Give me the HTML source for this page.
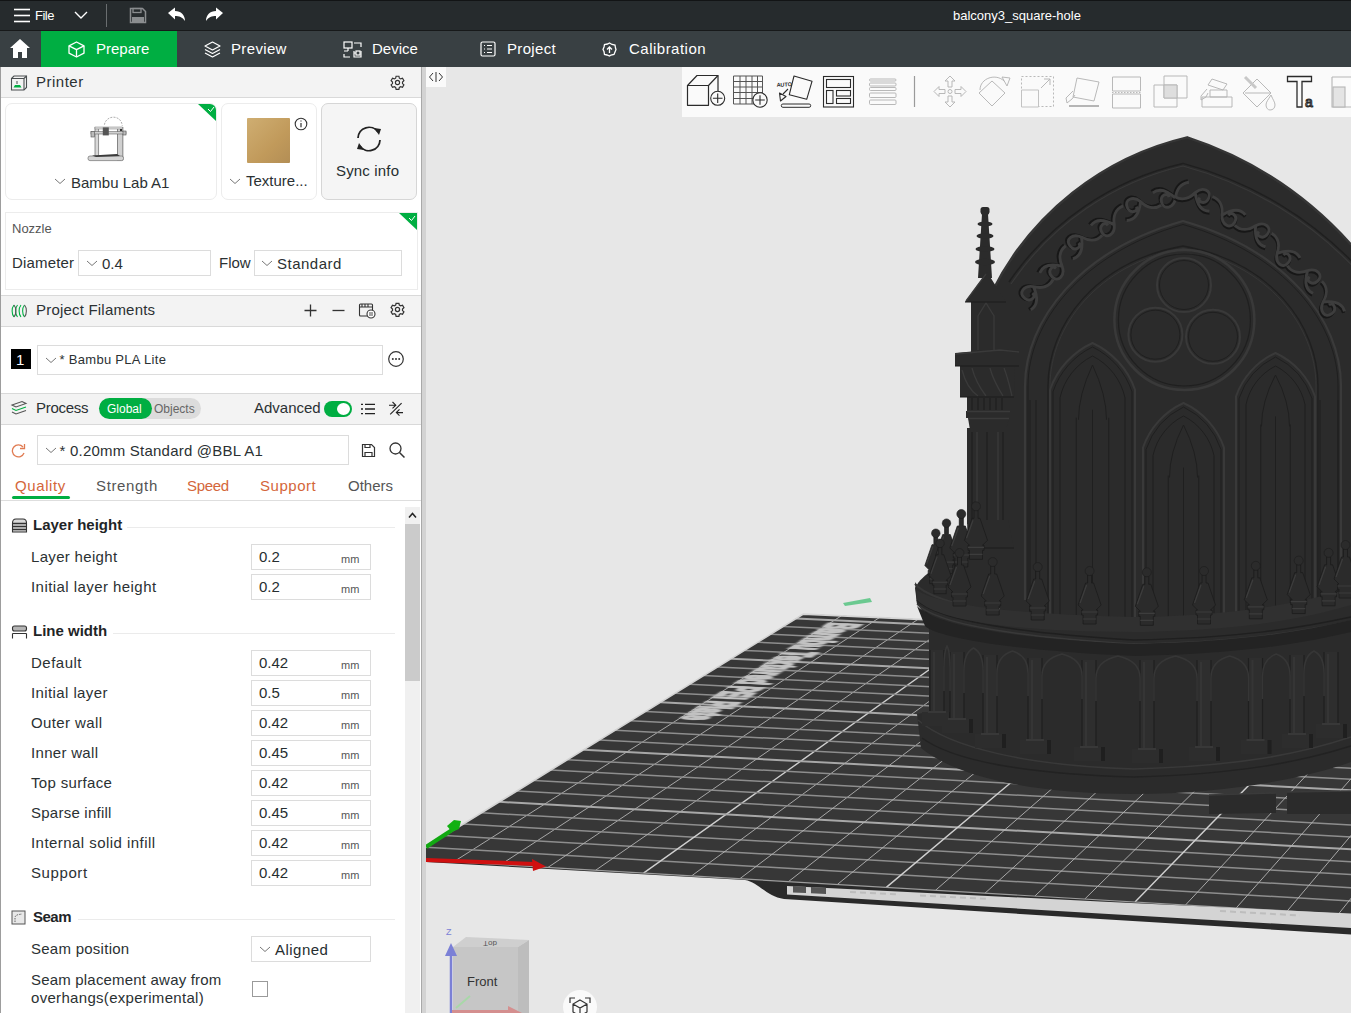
<!DOCTYPE html>
<html><head><meta charset="utf-8">
<style>
*{box-sizing:border-box;margin:0;padding:0}
html,body{width:1351px;height:1013px;overflow:hidden;background:#e4e4e4;font-family:"Liberation Sans",sans-serif;color:#262e30}
.a{position:absolute}
.t{position:absolute;white-space:nowrap;line-height:1}
#top{left:0;top:0;width:1351px;height:31px;background:#262b2d}
#tabs{left:0;top:31px;width:1351px;height:36px;background:#394043}
#left{left:0;top:67px;width:426px;height:946px;background:#fff}
.hdr{position:absolute;left:1px;width:420px;height:31px;background:#f3f3f3;border-bottom:1px solid #d9d9d9;border-top:1px solid #d9d9d9}
.inp{position:absolute;border:1px solid #dcdcdc;background:#fff}
.lbl{position:absolute;white-space:nowrap;line-height:1;font-size:15px;color:#2b3133}
.mm{position:absolute;font-size:11px;color:#555;line-height:1}
.val{position:absolute;font-size:15px;line-height:1;color:#262e30}
</style></head><body>

<div id="top" class="a">
 <svg class="a" style="left:13px;top:8px" width="18" height="15" viewBox="0 0 18 15"><g stroke="#fff" stroke-width="1.6"><line x1="1" y1="1.5" x2="17" y2="1.5"/><line x1="1" y1="7.5" x2="17" y2="7.5"/><line x1="1" y1="13.5" x2="17" y2="13.5"/></g></svg>
 <div class="t" style="left:35px;top:9px;font-size:13px;color:#fff;letter-spacing:-0.5px">File</div>
 <svg class="a" style="left:74px;top:11px" width="14" height="8" viewBox="0 0 14 8"><polyline points="1,1 7,7 13,1" fill="none" stroke="#fff" stroke-width="1.4"/></svg>
 <div class="a" style="left:106px;top:4px;width:1px;height:23px;background:#6a6e70"></div>
 <svg class="a" style="left:129px;top:7px" width="18" height="17" viewBox="0 0 18 17"><path d="M1.5 1.5h12l3 3v11h-15z" fill="none" stroke="#8a8d8f" stroke-width="1.5"/><rect x="4" y="1.5" width="8" height="4" fill="none" stroke="#8a8d8f" stroke-width="1.3"/><rect x="3" y="10" width="12" height="5" fill="#8a8d8f"/></svg>
 <svg class="a" style="left:167px;top:7px" width="19" height="15" viewBox="0 0 19 15"><path d="M1 6 L8 0.5 V4 C14 4 18 8 18 14 C15.5 10 12 9 8 9 V12.5 Z" fill="#fff"/></svg>
 <svg class="a" style="left:205px;top:7px" width="19" height="15" viewBox="0 0 19 15"><path d="M18 6 L11 0.5 V4 C5 4 1 8 1 14 C3.5 10 7 9 11 9 V12.5 Z" fill="#fff"/></svg>
 <div class="t" style="left:953px;top:9px;font-size:13px;color:#fff">balcony3_square-hole</div>
</div>
<div class="a" style="left:0;top:0;width:1351px;height:1px;background:#121415"></div><div class="a" style="left:0;top:30px;width:1351px;height:1px;background:#17191a"></div>
<div id="tabs" class="a">
 <svg class="a" style="left:9px;top:38px;top:7px" width="22" height="21" viewBox="0 0 22 21"><path d="M11 1 L21 10 H18 V20 H13 V14 H9 V20 H4 V10 H1 Z" fill="#fff"/></svg>
 <div class="a" style="left:41px;top:0;width:136px;height:36px;background:#00ae42"></div>
 <svg class="a" style="left:68px;top:10px" width="17" height="17" viewBox="0 0 17 17"><g fill="none" stroke="#fff" stroke-width="1.3" stroke-linejoin="round"><path d="M8.5 1 L16 4.8 V12.2 L8.5 16 L1 12.2 V4.8 Z"/><path d="M1 4.8 L8.5 8.6 L16 4.8 M8.5 8.6 V16"/></g></svg>
 <div class="t" style="left:96px;top:10px;font-size:15px;color:#fff">Prepare</div>
 <svg class="a" style="left:204px;top:10px" width="17" height="17" viewBox="0 0 17 17"><g fill="none" stroke="#fff" stroke-width="1.2" stroke-linejoin="round"><path d="M8.5 1 L16 5 L8.5 9 L1 5 Z"/><path d="M1 8.5 L8.5 12.5 L16 8.5"/><path d="M1 12 L8.5 16 L16 12"/></g></svg>
 <div class="t" style="left:231px;top:10px;font-size:15px;color:#fff;letter-spacing:0.35px">Preview</div>
 <svg class="a" style="left:343px;top:10px" width="19" height="17" viewBox="0 0 19 17"><g fill="none" stroke="#fff" stroke-width="1.2"><rect x="1" y="1" width="8" height="6"/><path d="M5 7v3M1 10h4M11 2h7v4M18 10v6h-7v-6M11 12h2"/><rect x="13" y="10" width="4" height="4"/><path d="M1 13v3h6"/></g></svg>
 <div class="t" style="left:372px;top:10px;font-size:15px;color:#fff">Device</div>
 <svg class="a" style="left:480px;top:10px" width="16" height="16" viewBox="0 0 16 16"><g fill="none" stroke="#fff" stroke-width="1.2"><rect x="1" y="1" width="14" height="14" rx="1.5"/><path d="M4 4.5h1M4 8h1M4 11.5h1M7 4.5h5M7 8h5M7 11.5h5"/></g></svg>
 <div class="t" style="left:507px;top:10px;font-size:15px;color:#fff;letter-spacing:0.33px">Project</div>
 <svg class="a" style="left:602px;top:11px" width="15" height="15" viewBox="0 0 15 15"><g fill="none" stroke="#fff" stroke-width="1.3"><path d="M7.5 1 L10 2.5 L13 3 L13.5 6 L14 7.5 L13 10 L12 12.5 L9 13 L7.5 14 L5 13 L2.5 12.5 L2 9.5 L1 7.5 L2 5 L2.5 2.5 L5.5 2 Z"/><path d="M7.5 11V5M5 7.5L7.5 5L10 7.5"/></g></svg>
 <div class="t" style="left:629px;top:10px;font-size:15px;color:#fff;letter-spacing:0.49px">Calibration</div>
</div>

<!--VP-->
<svg class="a" style="left:426px;top:67px" width="925" height="946" viewBox="426 67 925 946">
 <defs>
  <clipPath id="plateclip"><polygon points="406.5,859.1 803.4,614.1 1824.9,660.6 1683.2,934.3"/></clipPath>
  <linearGradient id="mg" x1="0" y1="0" x2="1" y2="0"><stop offset="0" stop-color="#2b2b2b"/><stop offset="1" stop-color="#303030"/></linearGradient>
 <filter id="blr" x="-10%" y="-10%" width="120%" height="120%"><feGaussianBlur stdDeviation="0.35"/></filter>
 </defs>
 <rect x="426" y="67" width="925" height="946" fill="#e7e7e7"/>
 <!-- plate body -->
 <path d="M406,861 L745,880 C758,882 766,896 784,899 L1100,919 L1351,934.5 L1700,945 L1824.9,660.6 L803.4,614.1 Z" fill="#2a2a2a"/>
 <polygon points="406.5,859.1 803.4,614.1 1824.9,660.6 1683.2,934.3" fill="#373737"/>
 <g clip-path="url(#plateclip)"><line x1="453.5" y1="861.9" x2="841.4" y2="615.8" stroke="#b4b4b4" stroke-width="0.9"/>
<line x1="425.9" y1="847.2" x2="1690.2" y2="920.8" stroke="#8e8e8e" stroke-width="1.5"/>
<line x1="500.7" y1="864.6" x2="879.6" y2="617.5" stroke="#b4b4b4" stroke-width="0.9"/>
<line x1="444.8" y1="835.5" x2="1697.0" y2="907.6" stroke="#8e8e8e" stroke-width="1.5"/>
<line x1="548.0" y1="867.4" x2="918.0" y2="619.3" stroke="#b4b4b4" stroke-width="0.9"/>
<line x1="463.3" y1="824.0" x2="1703.7" y2="894.7" stroke="#8e8e8e" stroke-width="1.5"/>
<line x1="595.7" y1="870.2" x2="956.4" y2="621.0" stroke="#b4b4b4" stroke-width="0.9"/>
<line x1="481.5" y1="812.8" x2="1710.3" y2="882.0" stroke="#8e8e8e" stroke-width="1.5"/>
<line x1="643.5" y1="873.1" x2="995.1" y2="622.8" stroke="#d0d0d0" stroke-width="1.4"/>
<line x1="499.4" y1="801.8" x2="1716.7" y2="869.6" stroke="#a8a8a8" stroke-width="2.0"/>
<line x1="691.6" y1="875.9" x2="1033.8" y2="624.5" stroke="#b4b4b4" stroke-width="0.9"/>
<line x1="516.9" y1="791.0" x2="1723.0" y2="857.4" stroke="#8e8e8e" stroke-width="1.5"/>
<line x1="739.9" y1="878.7" x2="1072.8" y2="626.3" stroke="#b4b4b4" stroke-width="0.9"/>
<line x1="534.1" y1="780.4" x2="1729.1" y2="845.5" stroke="#8e8e8e" stroke-width="1.5"/>
<line x1="788.5" y1="881.6" x2="1111.8" y2="628.1" stroke="#b4b4b4" stroke-width="0.9"/>
<line x1="550.9" y1="769.9" x2="1735.2" y2="833.9" stroke="#8e8e8e" stroke-width="1.5"/>
<line x1="837.3" y1="884.5" x2="1151.0" y2="629.9" stroke="#b4b4b4" stroke-width="0.9"/>
<line x1="567.5" y1="759.7" x2="1741.1" y2="822.4" stroke="#8e8e8e" stroke-width="1.5"/>
<line x1="886.3" y1="887.4" x2="1190.4" y2="631.7" stroke="#d0d0d0" stroke-width="1.4"/>
<line x1="583.7" y1="749.7" x2="1746.9" y2="811.2" stroke="#a8a8a8" stroke-width="2.0"/>
<line x1="935.5" y1="890.3" x2="1229.9" y2="633.5" stroke="#b4b4b4" stroke-width="0.9"/>
<line x1="599.7" y1="739.9" x2="1752.6" y2="800.2" stroke="#8e8e8e" stroke-width="1.5"/>
<line x1="985.0" y1="893.2" x2="1269.6" y2="635.3" stroke="#b4b4b4" stroke-width="0.9"/>
<line x1="615.3" y1="730.2" x2="1758.2" y2="789.4" stroke="#8e8e8e" stroke-width="1.5"/>
<line x1="1034.8" y1="896.1" x2="1309.5" y2="637.1" stroke="#b4b4b4" stroke-width="0.9"/>
<line x1="630.7" y1="720.7" x2="1763.7" y2="778.8" stroke="#8e8e8e" stroke-width="1.5"/>
<line x1="1084.8" y1="899.0" x2="1349.4" y2="638.9" stroke="#b4b4b4" stroke-width="0.9"/>
<line x1="645.8" y1="711.4" x2="1769.1" y2="768.4" stroke="#8e8e8e" stroke-width="1.5"/>
<line x1="1135.0" y1="902.0" x2="1389.6" y2="640.7" stroke="#d0d0d0" stroke-width="1.4"/>
<line x1="660.7" y1="702.2" x2="1774.4" y2="758.2" stroke="#a8a8a8" stroke-width="2.0"/>
<line x1="1185.5" y1="905.0" x2="1429.9" y2="642.6" stroke="#b4b4b4" stroke-width="0.9"/>
<line x1="675.3" y1="693.2" x2="1779.5" y2="748.2" stroke="#8e8e8e" stroke-width="1.5"/>
<line x1="1236.2" y1="908.0" x2="1470.3" y2="644.4" stroke="#b4b4b4" stroke-width="0.9"/>
<line x1="689.6" y1="684.3" x2="1784.6" y2="738.3" stroke="#8e8e8e" stroke-width="1.5"/>
<line x1="1287.2" y1="911.0" x2="1510.9" y2="646.3" stroke="#b4b4b4" stroke-width="0.9"/>
<line x1="703.7" y1="675.6" x2="1789.6" y2="728.7" stroke="#8e8e8e" stroke-width="1.5"/>
<line x1="1338.5" y1="914.0" x2="1551.7" y2="648.1" stroke="#b4b4b4" stroke-width="0.9"/>
<line x1="717.5" y1="667.1" x2="1794.5" y2="719.2" stroke="#8e8e8e" stroke-width="1.5"/>
<line x1="1390.0" y1="917.0" x2="1592.7" y2="650.0" stroke="#d0d0d0" stroke-width="1.4"/>
<line x1="731.2" y1="658.7" x2="1799.4" y2="709.8" stroke="#a8a8a8" stroke-width="2.0"/>
<line x1="1441.7" y1="920.1" x2="1633.7" y2="651.9" stroke="#b4b4b4" stroke-width="0.9"/>
<line x1="744.6" y1="650.4" x2="1804.1" y2="700.7" stroke="#8e8e8e" stroke-width="1.5"/>
<line x1="1493.8" y1="923.1" x2="1675.0" y2="653.7" stroke="#b4b4b4" stroke-width="0.9"/>
<line x1="757.7" y1="642.3" x2="1808.8" y2="691.7" stroke="#8e8e8e" stroke-width="1.5"/>
<line x1="1546.0" y1="926.2" x2="1716.4" y2="655.6" stroke="#b4b4b4" stroke-width="0.9"/>
<line x1="770.7" y1="634.3" x2="1813.3" y2="682.9" stroke="#8e8e8e" stroke-width="1.5"/>
<line x1="1598.6" y1="929.3" x2="1758.0" y2="657.5" stroke="#b4b4b4" stroke-width="0.9"/>
<line x1="783.4" y1="626.4" x2="1817.8" y2="674.2" stroke="#8e8e8e" stroke-width="1.5"/>
<line x1="1651.4" y1="932.4" x2="1799.8" y2="659.4" stroke="#d0d0d0" stroke-width="1.4"/>
<line x1="796.0" y1="618.6" x2="1822.3" y2="665.6" stroke="#a8a8a8" stroke-width="2.0"/></g>
 <polyline points="406.5,859.1 803.4,614.1 1824.9,660.6" fill="none" stroke="#d4d4d4" stroke-width="1.6"/>
 <text x="0" y="0" transform="matrix(-1.3325,0.8566,-4.0149,-0.1849,830.75,622.44)" font-family="Liberation Sans" font-weight="bold" font-size="11" textLength="113" lengthAdjust="spacingAndGlyphs" fill="#c2c2c2" stroke="#c2c2c2" stroke-width="1.2" filter="url(#blr)">Bambu Textured PEI Plate</text>
 <line x1="406.5" y1="859.1" x2="1683.2" y2="934.3" stroke="#9c9c9c" stroke-width="1.2"/>
 <!-- light strip -->
 <polygon points="787,886 1100,901.5 1351,913.5 1351,928 1100,913.5 787,894.5" fill="#d4d4d4"/>
 <path d="M793,886 L806,886.7 L806,893 L793,892.5 Z M811,887 L826,887.8 L826,894 L811,893.3 Z" fill="#555"/>
 <path d="M850,892 L900,894.5 M920,895.5 L990,899 M1220,911 L1300,915.5" stroke="#bdbdbd" stroke-width="2" stroke-dasharray="6 4"/>
 <!-- axes -->
 <path d="M426,860 L535,864" stroke="#d01010" stroke-width="4"/>
 <path d="M532,859 L546,866.5 L533,871 Z" fill="#d01010"/>
 <path d="M426,847 L452,830" stroke="#12a812" stroke-width="4"/>
 <path d="M447,826 L454,820 L461,821 L459,829 L452,832 Z" fill="#12b012"/>
 <path d="M843,603 L870,598 L872,602 L845,606 Z" fill="#4cc27a" opacity="0.8"/>
<!--MODEL--><path d="M992,292 A293,293 0 0 1 1187.2,137.4 A377.5,377.5 0 0 1 1351,244.5 L1351,630 L1000,630 Z" fill="#2b2b2b"/>
<path d="M992,292 A293,293 0 0 1 1187.2,137.4 A377.5,377.5 0 0 1 1351,244.5" fill="none" stroke="#353535" stroke-width="2.5"/>
<path d="M1009,282 A288.5,288.5 0 0 1 1183,163.4 A372,372 0 0 1 1362,272" fill="none" stroke="#1f1f1f" stroke-width="1.5"/>
<path d="M1011,284 A286.5,286.5 0 0 1 1183,166 A370,370 0 0 1 1360,274" fill="none" stroke="#383838" stroke-width="1.2"/>
<path d="M1025,600 V386 C1025,320 1080,250 1183,221 C1286,250 1341,320 1341,386 V616" fill="none" stroke="#3a3a3a" stroke-width="2.2"/>
<path d="M1028,600 V386 C1028,322 1082,253 1183,224.5 C1284,253 1338,322 1338,386 V616" fill="none" stroke="#1f1f1f" stroke-width="1"/>
<path d="M1048,614 V386 C1048,325 1095,262 1183,246 C1271,262 1318,325 1318,386 V614" fill="none" stroke="#1f1f1f" stroke-width="1.3"/>
<path d="M1050,614 V386 C1050,327 1097,264 1183,248.5 C1269,264 1316,327 1316,386 V614" fill="none" stroke="#363636" stroke-width="1"/>
<g transform="translate(1172.9,194.5) rotate(163.6) scale(1.45)"><path d="M-13,5 C-7,6 -3,2 -1,-3 C2,-9 9,-9 9,-3 C9,2 3,3 3,-1 M-1,-3 C3,4 8,7 13,5" fill="none" stroke="#171717" stroke-width="2.2" transform="translate(0.5,1.2)"/><path d="M-13,5 C-7,6 -3,2 -1,-3 C2,-9 9,-9 9,-3 C9,2 3,3 3,-1 M-1,-3 C3,4 8,7 13,5" fill="none" stroke="#3d3d3d" stroke-width="2"/></g>
<g transform="translate(1141.0,206.2) rotate(156.1) scale(1.45)"><path d="M-13,-5 C-7,-6 -3,-2 -1,3 C2,9 9,9 9,3 C9,-2 3,-3 3,1 M-1,3 C3,-4 8,-7 13,-5" fill="none" stroke="#171717" stroke-width="2.2" transform="translate(0.5,1.2)"/><path d="M-13,-5 C-7,-6 -3,-2 -1,3 C2,9 9,9 9,3 C9,-2 3,-3 3,1 M-1,3 C3,-4 8,-7 13,-5" fill="none" stroke="#3d3d3d" stroke-width="2"/></g>
<g transform="translate(1110.8,221.9) rotate(148.7) scale(1.45)"><path d="M-13,5 C-7,6 -3,2 -1,-3 C2,-9 9,-9 9,-3 C9,2 3,3 3,-1 M-1,-3 C3,4 8,7 13,5" fill="none" stroke="#171717" stroke-width="2.2" transform="translate(0.5,1.2)"/><path d="M-13,5 C-7,6 -3,2 -1,-3 C2,-9 9,-9 9,-3 C9,2 3,3 3,-1 M-1,-3 C3,4 8,7 13,5" fill="none" stroke="#3d3d3d" stroke-width="2"/></g>
<g transform="translate(1083.0,241.4) rotate(141.2) scale(1.45)"><path d="M-13,-5 C-7,-6 -3,-2 -1,3 C2,9 9,9 9,3 C9,-2 3,-3 3,1 M-1,3 C3,-4 8,-7 13,-5" fill="none" stroke="#171717" stroke-width="2.2" transform="translate(0.5,1.2)"/><path d="M-13,-5 C-7,-6 -3,-2 -1,3 C2,9 9,9 9,3 C9,-2 3,-3 3,1 M-1,3 C3,-4 8,-7 13,-5" fill="none" stroke="#3d3d3d" stroke-width="2"/></g>
<g transform="translate(1058.0,264.4) rotate(133.8) scale(1.45)"><path d="M-13,5 C-7,6 -3,2 -1,-3 C2,-9 9,-9 9,-3 C9,2 3,3 3,-1 M-1,-3 C3,4 8,7 13,5" fill="none" stroke="#171717" stroke-width="2.2" transform="translate(0.5,1.2)"/><path d="M-13,5 C-7,6 -3,2 -1,-3 C2,-9 9,-9 9,-3 C9,2 3,3 3,-1 M-1,-3 C3,4 8,7 13,5" fill="none" stroke="#3d3d3d" stroke-width="2"/></g>
<g transform="translate(1036.1,290.4) rotate(126.3) scale(1.45)"><path d="M-13,-5 C-7,-6 -3,-2 -1,3 C2,9 9,9 9,3 C9,-2 3,-3 3,1 M-1,3 C3,-4 8,-7 13,-5" fill="none" stroke="#171717" stroke-width="2.2" transform="translate(0.5,1.2)"/><path d="M-13,-5 C-7,-6 -3,-2 -1,3 C2,9 9,9 9,3 C9,-2 3,-3 3,1 M-1,3 C3,-4 8,-7 13,-5" fill="none" stroke="#3d3d3d" stroke-width="2"/></g>
<g transform="translate(1194.9,197.2) rotate(22.9) scale(1.45)"><path d="M-13,5 C-7,6 -3,2 -1,-3 C2,-9 9,-9 9,-3 C9,2 3,3 3,-1 M-1,-3 C3,4 8,7 13,5" fill="none" stroke="#171717" stroke-width="2.2" transform="translate(0.5,1.2)"/><path d="M-13,5 C-7,6 -3,2 -1,-3 C2,-9 9,-9 9,-3 C9,2 3,3 3,-1 M-1,-3 C3,4 8,7 13,5" fill="none" stroke="#3d3d3d" stroke-width="2"/></g>
<g transform="translate(1225.4,212.1) rotate(29.0) scale(1.45)"><path d="M-13,-5 C-7,-6 -3,-2 -1,3 C2,9 9,9 9,3 C9,-2 3,-3 3,1 M-1,3 C3,-4 8,-7 13,-5" fill="none" stroke="#171717" stroke-width="2.2" transform="translate(0.5,1.2)"/><path d="M-13,-5 C-7,-6 -3,-2 -1,3 C2,9 9,9 9,3 C9,-2 3,-3 3,1 M-1,3 C3,-4 8,-7 13,-5" fill="none" stroke="#3d3d3d" stroke-width="2"/></g>
<g transform="translate(1254.3,230.1) rotate(35.0) scale(1.45)"><path d="M-13,5 C-7,6 -3,2 -1,-3 C2,-9 9,-9 9,-3 C9,2 3,3 3,-1 M-1,-3 C3,4 8,7 13,5" fill="none" stroke="#171717" stroke-width="2.2" transform="translate(0.5,1.2)"/><path d="M-13,5 C-7,6 -3,2 -1,-3 C2,-9 9,-9 9,-3 C9,2 3,3 3,-1 M-1,-3 C3,4 8,7 13,5" fill="none" stroke="#3d3d3d" stroke-width="2"/></g>
<g transform="translate(1281.1,251.0) rotate(41.0) scale(1.45)"><path d="M-13,-5 C-7,-6 -3,-2 -1,3 C2,9 9,9 9,3 C9,-2 3,-3 3,1 M-1,3 C3,-4 8,-7 13,-5" fill="none" stroke="#171717" stroke-width="2.2" transform="translate(0.5,1.2)"/><path d="M-13,-5 C-7,-6 -3,-2 -1,3 C2,9 9,9 9,3 C9,-2 3,-3 3,1 M-1,3 C3,-4 8,-7 13,-5" fill="none" stroke="#3d3d3d" stroke-width="2"/></g>
<g transform="translate(1305.5,274.6) rotate(47.0) scale(1.45)"><path d="M-13,5 C-7,6 -3,2 -1,-3 C2,-9 9,-9 9,-3 C9,2 3,3 3,-1 M-1,-3 C3,4 8,7 13,5" fill="none" stroke="#171717" stroke-width="2.2" transform="translate(0.5,1.2)"/><path d="M-13,5 C-7,6 -3,2 -1,-3 C2,-9 9,-9 9,-3 C9,2 3,3 3,-1 M-1,-3 C3,4 8,7 13,5" fill="none" stroke="#3d3d3d" stroke-width="2"/></g>
<g transform="translate(1327.4,300.6) rotate(53.0) scale(1.45)"><path d="M-13,-5 C-7,-6 -3,-2 -1,3 C2,9 9,9 9,3 C9,-2 3,-3 3,1 M-1,3 C3,-4 8,-7 13,-5" fill="none" stroke="#171717" stroke-width="2.2" transform="translate(0.5,1.2)"/><path d="M-13,-5 C-7,-6 -3,-2 -1,3 C2,9 9,9 9,3 C9,-2 3,-3 3,1 M-1,3 C3,-4 8,-7 13,-5" fill="none" stroke="#3d3d3d" stroke-width="2"/></g>
<circle cx="1184.4" cy="320" r="70" fill="none" stroke="#393939" stroke-width="2.5"/>
<circle cx="1184.4" cy="320" r="66" fill="none" stroke="#1f1f1f" stroke-width="1.2"/>
<circle cx="1184" cy="285" r="27" fill="none" stroke="#393939" stroke-width="2"/>
<circle cx="1184" cy="285" r="24.5" fill="none" stroke="#1f1f1f" stroke-width="1"/>
<circle cx="1155.4" cy="334.7" r="27" fill="none" stroke="#393939" stroke-width="2"/>
<circle cx="1155.4" cy="334.7" r="24.5" fill="none" stroke="#1f1f1f" stroke-width="1"/>
<circle cx="1213" cy="336.8" r="27" fill="none" stroke="#393939" stroke-width="2"/>
<circle cx="1213" cy="336.8" r="24.5" fill="none" stroke="#1f1f1f" stroke-width="1"/>
<path d="M1050,618 L1050,389.75 A80.75,80.75 0 0 1 1092.5,343 A80.75,80.75 0 0 1 1135,389.75 L1135,618" fill="none" stroke="#393939" stroke-width="2"/>
<path d="M1053,618 L1053,391.75 A76.5,76.5 0 0 1 1092.5,347 A76.5,76.5 0 0 1 1132,391.75 L1132,618" fill="none" stroke="#1f1f1f" stroke-width="1"/>
<path d="M1060,618 L1060,397.75 A61.75,61.75 0 0 1 1092.5,356 A61.75,61.75 0 0 1 1125,397.75 L1125,618" fill="none" stroke="#1f1f1f" stroke-width="1"/>
<path d="M1092.5,409.75 V618 M1076.25,417.75 V618 M1108.75,417.75 V618" stroke="#1f1f1f" stroke-width="1"/>
<path d="M1078.5,419.75 Q1078.5,394.75 1092.5,365 Q1106.5,394.75 1106.5,419.75" fill="none" stroke="#1f1f1f" stroke-width="1"/>
<path d="M1143,622 L1143,447.55 A76.95,76.95 0 0 1 1183.5,403 A76.95,76.95 0 0 1 1224,447.55 L1224,622" fill="none" stroke="#393939" stroke-width="2"/>
<path d="M1146,622 L1146,449.55 A72.9,72.9 0 0 1 1183.5,407 A72.9,72.9 0 0 1 1221,449.55 L1221,622" fill="none" stroke="#1f1f1f" stroke-width="1"/>
<path d="M1153,622 L1153,455.55 A57.949999999999996,57.949999999999996 0 0 1 1183.5,416 A57.949999999999996,57.949999999999996 0 0 1 1214,455.55 L1214,622" fill="none" stroke="#1f1f1f" stroke-width="1"/>
<path d="M1183.5,467.55 V622 M1168.25,475.55 V622 M1198.75,475.55 V622" stroke="#1f1f1f" stroke-width="1"/>
<path d="M1169.5,477.55 Q1169.5,452.55 1183.5,425 Q1197.5,452.55 1197.5,477.55" fill="none" stroke="#1f1f1f" stroke-width="1"/>
<path d="M1236,618 L1236,396.45 A75.05,75.05 0 0 1 1275.5,353 A75.05,75.05 0 0 1 1315,396.45 L1315,618" fill="none" stroke="#393939" stroke-width="2"/>
<path d="M1239,618 L1239,398.45 A71.10000000000001,71.10000000000001 0 0 1 1275.5,357 A71.10000000000001,71.10000000000001 0 0 1 1312,398.45 L1312,618" fill="none" stroke="#1f1f1f" stroke-width="1"/>
<path d="M1246,618 L1246,404.45 A56.05,56.05 0 0 1 1275.5,366 A56.05,56.05 0 0 1 1305,404.45 L1305,618" fill="none" stroke="#1f1f1f" stroke-width="1"/>
<path d="M1275.5,416.45 V618 M1260.75,424.45 V618 M1290.25,424.45 V618" stroke="#1f1f1f" stroke-width="1"/>
<path d="M1261.5,426.45 Q1261.5,401.45 1275.5,375 Q1289.5,401.45 1289.5,426.45" fill="none" stroke="#1f1f1f" stroke-width="1"/>
<path d="M1030,400 V612 M1036,400 V614 M1320,400 V612 M1338,400 V606" stroke="#1f1f1f" stroke-width="1"/>
<g fill="#2b2b2b">
 <polygon points="982,214 988,214 992,278 978,278"/>
 <circle cx="985" cy="212" r="4.2"/>
 <rect x="980.5" y="207" width="9" height="7" rx="2.5"/>
 <ellipse cx="985" cy="224" rx="7.5" ry="2.6"/>
 <ellipse cx="985" cy="236" rx="8.5" ry="2.8"/>
 <ellipse cx="985" cy="249" rx="9.5" ry="3"/>
 <ellipse cx="985" cy="262" rx="10" ry="3.2"/>
 <polygon points="965,302 987,272 1006,302 1001,302 1001,352 971,352 971,302"/>
 <polygon points="955,353 1000,349 1019,351 1019,366 955,366"/>
 <polygon points="960,366 1015,366 1014,397 960,397"/>
 <rect x="967" y="396" width="43" height="16"/>
 <rect x="966" y="411" width="45" height="7"/>
 <polygon points="968,418 1009,418 1006,430 970,430"/>
 <rect x="967" y="428" width="41" height="96"/>
 <polygon points="967,520 1008,520 1014,550 968,550"/>
 <rect x="968" y="548" width="46" height="60"/>
</g>
<g fill="none" stroke="#3a3a3a" stroke-width="1.3">
 <path d="M966,301 L986,274"/>
 <path d="M978,350 V316 L986,303 L994,316 V350"/>
 <path d="M955,354 L1000,350 L1019,352"/>
 <path d="M962,370 C966,385 972,392 978,396 M972,368 C975,380 980,388 986,396 M990,368 C993,380 998,388 1003,396 M1004,368 C1008,378 1010,388 1012,396"/>
 <path d="M967,411.5 H1010 M968,418.5 H1009"/>
 <path d="M977,432 V520 M998,432 V520"/>
</g>
<g fill="none" stroke="#1c1c1c" stroke-width="1">
 <path d="M965,302 H1006 M955,366 H1019 M960,397 H1014"/>
 <path d="M972,398 V410 M978,398 V410 M984,398 V410 M990,398 V410 M996,398 V410 M1002,398 V410"/>
 <path d="M972,432 V520 M987,432 V520 M1003,432 V520"/>
 <path d="M968,548 H1014"/>
</g>
<path d="M915,582 C925,600 990,621 1134,627 C1230,626 1300,614 1351,600 L1351,762 C1300,780 1220,794 1134,794 C1030,794 955,776 921,748 L917,714 L929,712 L929,620 L917,604 Z" fill="#2b2b2b"/>
<path d="M915,588 C922,574 942,562 970,553 L970,625 L917,604 Z" fill="#2b2b2b"/>
<path d="M915,584 C930,600 990,619 1134,625 C1230,624 1300,612 1351,598" fill="none" stroke="#363636" stroke-width="2"/>
<path d="M917,600 C935,618 1000,632 1134,640 C1240,638 1300,628 1351,617" fill="none" stroke="#1f1f1f" stroke-width="1.5"/>
<path d="M917,604 C935,622 1000,636 1134,644 C1240,642 1300,632 1351,621" fill="none" stroke="#393939" stroke-width="1.5"/>
<path d="M925,612 C940,628 1000,642 1134,648 C1240,646 1300,636 1351,626" fill="none" stroke="#222" stroke-width="2"/>
<path d="M917,590 C935,603 1000,614 1134,617 C1230,616 1300,604 1351,588 L1351,605 C1300,620 1240,630 1134,632 C1000,632 935,618 917,600 Z" fill="#303030"/>
<path d="M917,606 C935,624 1000,638 1134,644 C1240,642 1300,632 1351,620 L1351,632 C1300,644 1240,654 1134,656 C1000,650 935,636 925,626 Z" fill="#232323"/>
<path d="M918,720 C950,748 1030,766 1134,769 C1240,766 1300,754 1351,737" fill="none" stroke="#393939" stroke-width="1.5"/>
<path d="M922,738 C955,762 1030,774 1134,777 C1240,774 1300,762 1351,746" fill="none" stroke="#222" stroke-width="1.5"/>
<rect x="930" y="650" width="14" height="66" fill="#2e2e2e"/>
<path d="M930,650 V716 M944,650 V716" stroke="#1f1f1f" stroke-width="1.2"/>
<path d="M934,652 V714" stroke="#353535" stroke-width="2"/>
<rect x="922" y="712" width="30" height="14" fill="#2d2d2d"/><rect x="949" y="712" width="4" height="14" fill="#1f1f1f"/><path d="M928,712 H946" stroke="#383838" stroke-width="2"/>
<rect x="950" y="652" width="14" height="71" fill="#2e2e2e"/>
<path d="M950,652 V723 M964,652 V723" stroke="#1f1f1f" stroke-width="1.2"/>
<path d="M954,654 V721" stroke="#353535" stroke-width="2"/>
<rect x="942" y="719" width="30" height="14" fill="#2d2d2d"/><rect x="969" y="719" width="4" height="14" fill="#1f1f1f"/><path d="M948,719 H966" stroke="#383838" stroke-width="2"/>
<rect x="983" y="655" width="14" height="83" fill="#2e2e2e"/>
<path d="M983,655 V738 M997,655 V738" stroke="#1f1f1f" stroke-width="1.2"/>
<path d="M987,657 V736" stroke="#353535" stroke-width="2"/>
<rect x="975" y="734" width="30" height="14" fill="#2d2d2d"/><rect x="1002" y="734" width="4" height="14" fill="#1f1f1f"/><path d="M981,734 H999" stroke="#383838" stroke-width="2"/>
<rect x="1028" y="658" width="14" height="86" fill="#2e2e2e"/>
<path d="M1028,658 V744 M1042,658 V744" stroke="#1f1f1f" stroke-width="1.2"/>
<path d="M1032,660 V742" stroke="#353535" stroke-width="2"/>
<rect x="1020" y="740" width="30" height="14" fill="#2d2d2d"/><rect x="1047" y="740" width="4" height="14" fill="#1f1f1f"/><path d="M1026,740 H1044" stroke="#383838" stroke-width="2"/>
<rect x="1082" y="660" width="14" height="91" fill="#2e2e2e"/>
<path d="M1082,660 V751 M1096,660 V751" stroke="#1f1f1f" stroke-width="1.2"/>
<path d="M1086,662 V749" stroke="#353535" stroke-width="2"/>
<rect x="1074" y="747" width="30" height="14" fill="#2d2d2d"/><rect x="1101" y="747" width="4" height="14" fill="#1f1f1f"/><path d="M1080,747 H1098" stroke="#383838" stroke-width="2"/>
<rect x="1140" y="660" width="14" height="93" fill="#2e2e2e"/>
<path d="M1140,660 V753 M1154,660 V753" stroke="#1f1f1f" stroke-width="1.2"/>
<path d="M1144,662 V751" stroke="#353535" stroke-width="2"/>
<rect x="1132" y="749" width="30" height="14" fill="#2d2d2d"/><rect x="1159" y="749" width="4" height="14" fill="#1f1f1f"/><path d="M1138,749 H1156" stroke="#383838" stroke-width="2"/>
<rect x="1197" y="660" width="14" height="91" fill="#2e2e2e"/>
<path d="M1197,660 V751 M1211,660 V751" stroke="#1f1f1f" stroke-width="1.2"/>
<path d="M1201,662 V749" stroke="#353535" stroke-width="2"/>
<rect x="1189" y="747" width="30" height="14" fill="#2d2d2d"/><rect x="1216" y="747" width="4" height="14" fill="#1f1f1f"/><path d="M1195,747 H1213" stroke="#383838" stroke-width="2"/>
<rect x="1248.5" y="658" width="14" height="86" fill="#2e2e2e"/>
<path d="M1248.5,658 V744 M1262.5,658 V744" stroke="#1f1f1f" stroke-width="1.2"/>
<path d="M1252.5,660 V742" stroke="#353535" stroke-width="2"/>
<rect x="1240.5" y="740" width="30" height="14" fill="#2d2d2d"/><rect x="1267.5" y="740" width="4" height="14" fill="#1f1f1f"/><path d="M1246.5,740 H1264.5" stroke="#383838" stroke-width="2"/>
<rect x="1290" y="655" width="14" height="83" fill="#2e2e2e"/>
<path d="M1290,655 V738 M1304,655 V738" stroke="#1f1f1f" stroke-width="1.2"/>
<path d="M1294,657 V736" stroke="#353535" stroke-width="2"/>
<rect x="1282" y="734" width="30" height="14" fill="#2d2d2d"/><rect x="1309" y="734" width="4" height="14" fill="#1f1f1f"/><path d="M1288,734 H1306" stroke="#383838" stroke-width="2"/>
<rect x="1324" y="652" width="14" height="76" fill="#2e2e2e"/>
<path d="M1324,652 V728 M1338,652 V728" stroke="#1f1f1f" stroke-width="1.2"/>
<path d="M1328,654 V726" stroke="#353535" stroke-width="2"/>
<rect x="1316" y="724" width="30" height="14" fill="#2d2d2d"/><rect x="1343" y="724" width="4" height="14" fill="#1f1f1f"/><path d="M1322,724 H1340" stroke="#383838" stroke-width="2"/>
<path d="M944,691 V668 Q944,651 947.0,646 Q950,651 950,668 V691" fill="none" stroke="#363636" stroke-width="1.5"/>
<path d="M964,693 V670 Q964,653 973.5,648 Q983,653 983,670 V693" fill="none" stroke="#363636" stroke-width="1.5"/>
<path d="M997,696 V673 Q997,656 1012.5,651 Q1028,656 1028,673 V696" fill="none" stroke="#363636" stroke-width="1.5"/>
<path d="M1042,699 V676 Q1042,659 1062.0,654 Q1082,659 1082,676 V699" fill="none" stroke="#363636" stroke-width="1.5"/>
<path d="M1096,701 V678 Q1096,661 1118.0,656 Q1140,661 1140,678 V701" fill="none" stroke="#363636" stroke-width="1.5"/>
<path d="M1154,701 V678 Q1154,661 1175.5,656 Q1197,661 1197,678 V701" fill="none" stroke="#363636" stroke-width="1.5"/>
<path d="M1211,701 V678 Q1211,661 1229.75,656 Q1248.5,661 1248.5,678 V701" fill="none" stroke="#363636" stroke-width="1.5"/>
<path d="M1262.5,699 V676 Q1262.5,659 1276.25,654 Q1290,659 1290,676 V699" fill="none" stroke="#363636" stroke-width="1.5"/>
<path d="M1304,696 V673 Q1304,656 1314.0,651 Q1324,656 1324,673 V696" fill="none" stroke="#363636" stroke-width="1.5"/>
<g transform="translate(935.8,528.5) scale(0.95)">
 <polygon points="-2,9 2,9 2,17 4,17 11.5,39 6.5,44 8,44 8,49 6.5,49 6.5,58 -6.5,58 -6.5,49 -8,49 -8,44 -6.5,44 -11.5,39 -4,17 -2,17" fill="#2b2b2b" stroke="#1c1c1c" stroke-width="0.8"/>
 <circle cx="0" cy="5" r="4.5" fill="#2b2b2b" stroke="#1c1c1c" stroke-width="0.6"/>
 <path d="M-3,19 L-9.5,37 M-8,46 H8 M-6.5,53 H6.5" stroke="#3d3d3d" stroke-width="1.2" fill="none"/>
</g>
<g transform="translate(946.5,518.4) scale(0.95)">
 <polygon points="-2,9 2,9 2,17 4,17 11.5,39 6.5,44 8,44 8,49 6.5,49 6.5,58 -6.5,58 -6.5,49 -8,49 -8,44 -6.5,44 -11.5,39 -4,17 -2,17" fill="#2b2b2b" stroke="#1c1c1c" stroke-width="0.8"/>
 <circle cx="0" cy="5" r="4.5" fill="#2b2b2b" stroke="#1c1c1c" stroke-width="0.6"/>
 <path d="M-3,19 L-9.5,37 M-8,46 H8 M-6.5,53 H6.5" stroke="#3d3d3d" stroke-width="1.2" fill="none"/>
</g>
<g transform="translate(961.3,509) scale(1.0)">
 <polygon points="-2,9 2,9 2,17 4,17 11.5,39 6.5,44 8,44 8,49 6.5,49 6.5,58 -6.5,58 -6.5,49 -8,49 -8,44 -6.5,44 -11.5,39 -4,17 -2,17" fill="#2b2b2b" stroke="#1c1c1c" stroke-width="0.8"/>
 <circle cx="0" cy="5" r="4.5" fill="#2b2b2b" stroke="#1c1c1c" stroke-width="0.6"/>
 <path d="M-3,19 L-9.5,37 M-8,46 H8 M-6.5,53 H6.5" stroke="#3d3d3d" stroke-width="1.2" fill="none"/>
</g>
<g transform="translate(976,501.3) scale(1.0)">
 <polygon points="-2,9 2,9 2,17 4,17 11.5,39 6.5,44 8,44 8,49 6.5,49 6.5,58 -6.5,58 -6.5,49 -8,49 -8,44 -6.5,44 -11.5,39 -4,17 -2,17" fill="#2b2b2b" stroke="#1c1c1c" stroke-width="0.8"/>
 <circle cx="0" cy="5" r="4.5" fill="#2b2b2b" stroke="#1c1c1c" stroke-width="0.6"/>
 <path d="M-3,19 L-9.5,37 M-8,46 H8 M-6.5,53 H6.5" stroke="#3d3d3d" stroke-width="1.2" fill="none"/>
</g>
<g transform="translate(940,538.6) scale(0.95)">
 <polygon points="-2,9 2,9 2,17 4,17 11.5,39 6.5,44 8,44 8,49 6.5,49 6.5,58 -6.5,58 -6.5,49 -8,49 -8,44 -6.5,44 -11.5,39 -4,17 -2,17" fill="#2b2b2b" stroke="#1c1c1c" stroke-width="0.8"/>
 <circle cx="0" cy="5" r="4.5" fill="#2b2b2b" stroke="#1c1c1c" stroke-width="0.6"/>
 <path d="M-3,19 L-9.5,37 M-8,46 H8 M-6.5,53 H6.5" stroke="#3d3d3d" stroke-width="1.2" fill="none"/>
</g>
<g transform="translate(959.5,548) scale(1.0)">
 <polygon points="-2,9 2,9 2,17 4,17 11.5,39 6.5,44 8,44 8,49 6.5,49 6.5,58 -6.5,58 -6.5,49 -8,49 -8,44 -6.5,44 -11.5,39 -4,17 -2,17" fill="#2b2b2b" stroke="#1c1c1c" stroke-width="0.8"/>
 <circle cx="0" cy="5" r="4.5" fill="#2b2b2b" stroke="#1c1c1c" stroke-width="0.6"/>
 <path d="M-3,19 L-9.5,37 M-8,46 H8 M-6.5,53 H6.5" stroke="#3d3d3d" stroke-width="1.2" fill="none"/>
</g>
<g transform="translate(992.7,557) scale(1.0)">
 <polygon points="-2,9 2,9 2,17 4,17 11.5,39 6.5,44 8,44 8,49 6.5,49 6.5,58 -6.5,58 -6.5,49 -8,49 -8,44 -6.5,44 -11.5,39 -4,17 -2,17" fill="#2b2b2b" stroke="#1c1c1c" stroke-width="0.8"/>
 <circle cx="0" cy="5" r="4.5" fill="#2b2b2b" stroke="#1c1c1c" stroke-width="0.6"/>
 <path d="M-3,19 L-9.5,37 M-8,46 H8 M-6.5,53 H6.5" stroke="#3d3d3d" stroke-width="1.2" fill="none"/>
</g>
<g transform="translate(1037.7,562) scale(1.0)">
 <polygon points="-2,9 2,9 2,17 4,17 11.5,39 6.5,44 8,44 8,49 6.5,49 6.5,58 -6.5,58 -6.5,49 -8,49 -8,44 -6.5,44 -11.5,39 -4,17 -2,17" fill="#2b2b2b" stroke="#1c1c1c" stroke-width="0.8"/>
 <circle cx="0" cy="5" r="4.5" fill="#2b2b2b" stroke="#1c1c1c" stroke-width="0.6"/>
 <path d="M-3,19 L-9.5,37 M-8,46 H8 M-6.5,53 H6.5" stroke="#3d3d3d" stroke-width="1.2" fill="none"/>
</g>
<g transform="translate(1089.6,566) scale(1.0)">
 <polygon points="-2,9 2,9 2,17 4,17 11.5,39 6.5,44 8,44 8,49 6.5,49 6.5,58 -6.5,58 -6.5,49 -8,49 -8,44 -6.5,44 -11.5,39 -4,17 -2,17" fill="#2b2b2b" stroke="#1c1c1c" stroke-width="0.8"/>
 <circle cx="0" cy="5" r="4.5" fill="#2b2b2b" stroke="#1c1c1c" stroke-width="0.6"/>
 <path d="M-3,19 L-9.5,37 M-8,46 H8 M-6.5,53 H6.5" stroke="#3d3d3d" stroke-width="1.2" fill="none"/>
</g>
<g transform="translate(1146.8,567.3) scale(1.0)">
 <polygon points="-2,9 2,9 2,17 4,17 11.5,39 6.5,44 8,44 8,49 6.5,49 6.5,58 -6.5,58 -6.5,49 -8,49 -8,44 -6.5,44 -11.5,39 -4,17 -2,17" fill="#2b2b2b" stroke="#1c1c1c" stroke-width="0.8"/>
 <circle cx="0" cy="5" r="4.5" fill="#2b2b2b" stroke="#1c1c1c" stroke-width="0.6"/>
 <path d="M-3,19 L-9.5,37 M-8,46 H8 M-6.5,53 H6.5" stroke="#3d3d3d" stroke-width="1.2" fill="none"/>
</g>
<g transform="translate(1204,566) scale(1.0)">
 <polygon points="-2,9 2,9 2,17 4,17 11.5,39 6.5,44 8,44 8,49 6.5,49 6.5,58 -6.5,58 -6.5,49 -8,49 -8,44 -6.5,44 -11.5,39 -4,17 -2,17" fill="#2b2b2b" stroke="#1c1c1c" stroke-width="0.8"/>
 <circle cx="0" cy="5" r="4.5" fill="#2b2b2b" stroke="#1c1c1c" stroke-width="0.6"/>
 <path d="M-3,19 L-9.5,37 M-8,46 H8 M-6.5,53 H6.5" stroke="#3d3d3d" stroke-width="1.2" fill="none"/>
</g>
<g transform="translate(1255.8,560.8) scale(1.0)">
 <polygon points="-2,9 2,9 2,17 4,17 11.5,39 6.5,44 8,44 8,49 6.5,49 6.5,58 -6.5,58 -6.5,49 -8,49 -8,44 -6.5,44 -11.5,39 -4,17 -2,17" fill="#2b2b2b" stroke="#1c1c1c" stroke-width="0.8"/>
 <circle cx="0" cy="5" r="4.5" fill="#2b2b2b" stroke="#1c1c1c" stroke-width="0.6"/>
 <path d="M-3,19 L-9.5,37 M-8,46 H8 M-6.5,53 H6.5" stroke="#3d3d3d" stroke-width="1.2" fill="none"/>
</g>
<g transform="translate(1298.7,555.6) scale(1.0)">
 <polygon points="-2,9 2,9 2,17 4,17 11.5,39 6.5,44 8,44 8,49 6.5,49 6.5,58 -6.5,58 -6.5,49 -8,49 -8,44 -6.5,44 -11.5,39 -4,17 -2,17" fill="#2b2b2b" stroke="#1c1c1c" stroke-width="0.8"/>
 <circle cx="0" cy="5" r="4.5" fill="#2b2b2b" stroke="#1c1c1c" stroke-width="0.6"/>
 <path d="M-3,19 L-9.5,37 M-8,46 H8 M-6.5,53 H6.5" stroke="#3d3d3d" stroke-width="1.2" fill="none"/>
</g>
<g transform="translate(1328.6,547.8) scale(1.0)">
 <polygon points="-2,9 2,9 2,17 4,17 11.5,39 6.5,44 8,44 8,49 6.5,49 6.5,58 -6.5,58 -6.5,49 -8,49 -8,44 -6.5,44 -11.5,39 -4,17 -2,17" fill="#2b2b2b" stroke="#1c1c1c" stroke-width="0.8"/>
 <circle cx="0" cy="5" r="4.5" fill="#2b2b2b" stroke="#1c1c1c" stroke-width="0.6"/>
 <path d="M-3,19 L-9.5,37 M-8,46 H8 M-6.5,53 H6.5" stroke="#3d3d3d" stroke-width="1.2" fill="none"/>
</g>
<g transform="translate(1345.5,540) scale(1.0)">
 <polygon points="-2,9 2,9 2,17 4,17 11.5,39 6.5,44 8,44 8,49 6.5,49 6.5,58 -6.5,58 -6.5,49 -8,49 -8,44 -6.5,44 -11.5,39 -4,17 -2,17" fill="#2b2b2b" stroke="#1c1c1c" stroke-width="0.8"/>
 <circle cx="0" cy="5" r="4.5" fill="#2b2b2b" stroke="#1c1c1c" stroke-width="0.6"/>
 <path d="M-3,19 L-9.5,37 M-8,46 H8 M-6.5,53 H6.5" stroke="#3d3d3d" stroke-width="1.2" fill="none"/>
</g>
<path d="M1209,795 L1276,793 L1276,813 L1209,814 Z M1287,792 L1351,791 L1351,814 L1287,814 Z" fill="#2b2b2b"/><path d="M1209,795 L1276,793 M1287,792 L1351,791" stroke="#3a3a3a" stroke-width="1.5"/><!--/MODEL-->
</svg>
<!--/VP-->
<!--TB-->
<div class="a" style="left:426px;top:67px;width:20px;height:20px;background:#fafafa"></div>
<svg class="a" style="left:428px;top:71px" width="16" height="12" viewBox="0 0 16 12"><g fill="none" stroke="#333" stroke-width="1"><polyline points="5,2 1.5,6 5,10"/><polyline points="11,2 14.5,6 11,10"/><line x1="8" y1="1" x2="8" y2="11"/></g></svg>
<div class="a" style="left:682px;top:67px;width:669px;height:50px;background:#fafafa"></div>
<svg class="a" style="left:682px;top:67px" width="669" height="50" viewBox="682 67 669 50">
 <g fill="none" stroke="#2b2b2b" stroke-width="1.3" stroke-linejoin="round">
  <!-- add cube -->
  <path d="M687.5,85.5 L697,75.5 L718,75.5 L708.5,85.5 Z" stroke-width="1.2"/>
  <path d="M687.5,85.5 V105.3 H708.5 V85.5 M718,75.5 V93" stroke-width="1.2"/>
  <circle cx="717.7" cy="98.3" r="7" fill="#fafafa" stroke-width="1.1"/>
  <path d="M717.7,93.5 V103.1 M712.9,98.3 H722.5" stroke-width="1.1"/>
  <!-- grid plus -->
  <path d="M733.5,76 H762.5 V104 H733.5 Z M733.5,81.5 H762.5 M733.5,87 H762.5 M733.5,92.5 H762.5 M733.5,98.5 H762.5 M740,76 V104 M746,76 V104 M752,76 V104 M757.5,76 V104" stroke-width="1" stroke="#555"/>
  <circle cx="760" cy="100" r="7.2" fill="#fafafa" stroke-width="1.1"/>
  <path d="M760,95.2 V104.8 M755.2,100 H764.8" stroke-width="1.1"/>
  <!-- auto orient -->
  <path d="M794,76 L812,81.3 L806.7,99.3 L789.3,94.7 Z" stroke-width="1.1"/>
  <path d="M788,89 L783,94" stroke-width="1.1"/>
  <path d="M779.5,93 L786,96.5 L780.5,101 Z" stroke-width="1.1"/>
  <rect x="781.3" y="104" width="29.4" height="3.3" rx="1.6" stroke-width="1"/>
 </g>
 <text x="776.5" y="86.5" font-family="Liberation Sans" font-size="5.5" font-weight="bold" fill="#2b2b2b" transform="rotate(-3 783 84)">AUTO</text>
 <g fill="none" stroke="#2b2b2b" stroke-width="1.2">
  <!-- arrange -->
  <rect x="823.5" y="76.5" width="30" height="30.5" stroke-width="1.1"/>
  <rect x="826.5" y="79.5" width="24" height="8" stroke-width="1.1"/>
  <rect x="826.5" y="90.5" width="6.5" height="13" stroke-width="1.1"/>
  <rect x="836.5" y="90.5" width="14" height="5.5" stroke-width="1.1"/>
  <rect x="836.5" y="98.5" width="14" height="5" stroke-width="1.1"/>
 </g>
 <g fill="none" stroke="#b8b8b8" stroke-width="1">
  <rect x="869.5" y="79" width="26.5" height="2" rx="1"/>
  <rect x="869.5" y="83" width="26.5" height="3" rx="1"/>
  <rect x="869.5" y="87.5" width="26.5" height="3" rx="1"/>
  <rect x="869.5" y="93" width="26.5" height="4.5" rx="1"/>
  <rect x="869.5" y="100" width="26.5" height="4.5" rx="1"/>
 </g>
 <line x1="914.5" y1="76" x2="914.5" y2="107" stroke="#9a9a9a" stroke-width="1.2"/>
 <g fill="none" stroke="#b5b5b5" stroke-width="0.95" stroke-linejoin="round">
  <!-- move -->
  <path d="M950,76 L945,81 H948 V87 H952 V81 H955 Z M950,107 L945,102 H948 V96 H952 V102 H955 Z M934,91.5 L939,86.5 V89.5 H945 V93.5 H939 V96.5 Z M966,91.5 L961,86.5 V89.5 H955 V93.5 H961 V96.5 Z"/>
  <circle cx="950" cy="91.5" r="2"/>
  <!-- rotate -->
  <path d="M992,81 L1005,93 L992,106 L979,93 Z"/>
  <path d="M980,90 C980,78 996,73 1004,81"/>
  <path d="M1002,77 L1010,78 L1007,86 Z"/>
  <!-- scale -->
  <rect x="1021.5" y="76.5" width="32" height="30" stroke-dasharray="2 2"/>
  <rect x="1021.5" y="90" width="17" height="17" stroke="#c0c0c0" fill="#fafafa" stroke-dasharray="none"/>
  <path d="M1041,88 L1050,79 M1044,79 H1050 V85"/>
  <!-- lay on face -->
  <path d="M1077,78 L1099,82 L1094,101 L1073,97 Z"/>
  <path d="M1073,91 L1066,98 L1067,103 L1072,99 L1075,95"/>
  <path d="M1069,106 H1099" stroke-width="2"/>
  <!-- cut -->
  <rect x="1112.5" y="77" width="28" height="14"/>
  <rect x="1112.5" y="94" width="28" height="14"/>
  <path d="M1112,92.5 H1141" stroke-dasharray="1.5 1.5"/>
  <!-- boolean -->
  <rect x="1154" y="85" width="23" height="22"/>
  <rect x="1164" y="76" width="23" height="22"/>
  <rect x="1164" y="85" width="13" height="13" fill="#dedede"/>
  <!-- support paint -->
  <rect x="1202" y="97" width="30" height="10"/>
  <rect x="1210" y="90" width="17" height="7"/>
  <path d="M1212,79 L1227,84 L1223,90 L1208,85 Z"/>
  <path d="M1207,89 L1201,96 L1201,100 L1206,97 L1208,93"/>
  <!-- paint bucket -->
  <path d="M1243,93 L1257,79 L1271,93 L1257,107 Z"/>
  <path d="M1245,93 H1270"/>
  <path d="M1245,77 L1256,88" stroke-width="3" stroke="#c8c8c8"/>
  <path d="M1271,95 C1268,100 1266,102 1266,105 C1266,108 1268,110 1270,110 C1273,110 1275,108 1275,105 C1275,102 1273,100 1271,95 Z"/>
 </g>
 <!-- Ta -->
 <path d="M1287.5,76.5 H1311.5 V81.5 H1302 V107 H1297 V81.5 H1287.5 Z" fill="none" stroke="#2b2b2b" stroke-width="1.3"/>
 <text x="1305" y="107" font-family="Liberation Sans" font-size="14" fill="#fafafa" stroke="#2b2b2b" stroke-width="1">a</text>
 <g fill="none" stroke="#b5b5b5" stroke-width="1.1">
  <path d="M1332,77 H1351 M1332,77 V107 H1351"/>
  <rect x="1333" y="87" width="12" height="20" fill="#e4e4e4"/>
 </g>
</svg>
<!-- view cube -->
<svg class="a" style="left:426px;top:915px" width="200" height="98" viewBox="426 915 200 98">
 <polygon points="453,947 466,937 529,940 518,947" fill="#cfcfcf"/>
 <polygon points="518,947 529,940 529,1013 518,1013" fill="#bdbdbd"/>
 <rect x="453" y="947" width="65" height="66" fill="#c6c6c6"/>
 <text x="467" y="986" font-family="Liberation Sans" font-size="13" fill="#333">Front</text>
 <text x="483" y="945" font-family="Liberation Sans" font-size="8" fill="#555" transform="rotate(180 490 943)">doT</text>
 <line x1="451" y1="952" x2="451" y2="1013" stroke="#7b80d6" stroke-width="2.5"/>
 <polygon points="445,956 451,943 457,956" fill="#7b80d6"/>
 <text x="446" y="935" font-family="Liberation Sans" font-size="9" fill="#7b80d6">Z</text>
 <path d="M456,1008 L470,996" stroke="#a8d8a8" stroke-width="2"/>
 <rect x="452" y="1010" width="62" height="3" fill="#d48f8f"/><polygon points="508,1006 522,1013 508,1013" fill="#d48f8f"/>
 <circle cx="580" cy="1007" r="17" fill="#fafafa"/>
 <g fill="none" stroke="#333" stroke-width="1.2"><path d="M570,1003 V998 H575 M585,998 H590 V1003"/><path d="M580,1000 L587,1004 L587,1012 L580,1016 L573,1012 L573,1004 Z M573,1004 L580,1008 L587,1004 M580,1008 V1016"/></g>
</svg>
<!--/TB-->
<div id="left" class="a">
 <div class="a" style="left:0;top:0;width:1px;height:946px;background:#9d9d9d"></div>
 <!-- Printer header -->
 <div class="hdr" style="top:0;border-top:none;height:31px"></div>
 <svg class="a" style="left:10px;top:8px" width="18" height="16" viewBox="0 0 18 16"><g fill="none" stroke="#4a4f51" stroke-width="1.1"><path d="M1.5 3.5 L4 1 H16.5 V12.5 L14 15 H1.5 Z"/><path d="M1.5 3.5 H14 V15 M14 3.5 L16.5 1"/></g><path d="M3.5 12.5 L5 10 H10 L11.5 12.5 Z" fill="#00ae42"/><path d="M7 6 V9" stroke="#4a4f51" stroke-width="1"/></svg>
 <div class="lbl" style="left:36px;top:7px;font-size:15px;letter-spacing:0.5px">Printer</div>
 <svg class="a" style="left:390.3px;top:7.5px" width="15" height="15" viewBox="0 0 18 18"><g fill="none" stroke="#333" stroke-width="1.4"><path d="M7.3 1.5h3.4l.5 2.3 1.6.9 2.2-.8 1.7 2.9-1.7 1.6v1.9l1.7 1.6-1.7 2.9-2.2-.8-1.6.9-.5 2.3H7.3l-.5-2.3-1.6-.9-2.2.8-1.7-2.9 1.7-1.6V8.4L1.3 6.8 3 3.9l2.2.8 1.6-.9z"/><circle cx="9" cy="9" r="2.5"/></g></svg>
 <!-- printer cards -->
 <div class="a" style="left:5px;top:36px;width:212px;height:97px;border:1px solid #ececec;border-radius:7px;background:#fff;overflow:hidden">
   <svg class="a" style="right:0;top:0" width="18" height="17" viewBox="0 0 18 17"><path d="M0 0H18V17Z" fill="#00ae42"/><polyline points="10,5 12.5,7.5 16,3" fill="none" stroke="#fff" stroke-width="1"/></svg>
 </div>
 <svg class="a" style="left:87px;top:48px" width="40" height="48" viewBox="87 115 40 48">
   <path d="M104.4,124.7 C106,115 121,114 122.3,125.7" fill="none" stroke="#999" stroke-width="0.8" stroke-dasharray="2 1.2"/>
   <rect x="95" y="127.4" width="3.7" height="29.5" fill="#d8d8d8" stroke="#6a6a6a" stroke-width="0.7"/>
   <rect x="117.5" y="127.4" width="5.4" height="32.5" fill="#d0d0d0" stroke="#5a5a5a" stroke-width="0.7"/>
   <rect x="95" y="127" width="27.5" height="2" fill="#e0e0e0" stroke="#777" stroke-width="0.5"/>
   <rect x="91" y="131.7" width="35" height="2.3" fill="#cfcfcf" stroke="#666" stroke-width="0.6"/>
   <rect x="91" y="131.5" width="3.5" height="5.5" fill="#bbb" stroke="#555" stroke-width="0.6"/>
   <rect x="123" y="131" width="3" height="4" fill="#bbb" stroke="#555" stroke-width="0.6"/>
   <rect x="102.8" y="127.4" width="6" height="8" fill="#555"/>
   <rect x="120" y="129" width="2" height="2" fill="#333"/>
   <rect x="88" y="156" width="35.5" height="4.6" rx="2" fill="#d4d4d4" stroke="#707070" stroke-width="0.7"/>
   <path d="M92,155.5 L117,154 L120,156 L96,157 Z" fill="#3a3a3a"/>
 </svg>
 <svg class="a" style="left:54px;top:111px" width="12" height="7" viewBox="0 0 12 7"><polyline points="1,1 6,5.5 11,1" fill="none" stroke="#777" stroke-width="1"/></svg>
 <div class="lbl" style="left:71px;top:108px;font-size:15px">Bambu Lab A1</div>

 <div class="a" style="left:221px;top:36px;width:96px;height:97px;border:1px solid #ececec;border-radius:7px;background:#fff"></div>
 <div class="a" style="left:247px;top:51px;width:43px;height:45px;background:linear-gradient(135deg,#cfae72,#c19a5b 60%,#b38e55);border-radius:1px"></div>
 <svg class="a" style="left:294px;top:50px" width="14" height="14" viewBox="0 0 14 14"><circle cx="7" cy="7" r="5.8" fill="none" stroke="#333" stroke-width="1.1"/><path d="M7 6v4.2M7 3.6v1" stroke="#333" stroke-width="1.2"/></svg>
 <svg class="a" style="left:229px;top:111px" width="12" height="7" viewBox="0 0 12 7"><polyline points="1,1 6,5.5 11,1" fill="none" stroke="#777" stroke-width="1"/></svg>
 <div class="lbl" style="left:246px;top:106px;font-size:15px">Texture...</div>

 <div class="a" style="left:321px;top:36px;width:96px;height:97px;border:1px solid #d6d6d6;border-radius:7px;background:#f5f5f5"></div>
 <svg class="a" style="left:354px;top:58px" width="30" height="28" viewBox="0 0 30 28"><g fill="none" stroke="#222" stroke-width="1.8"><path d="M4 13 A11 11 0 0 1 24 7"/><path d="M26 15 A11 11 0 0 1 6 21"/></g><path d="M20 3 L27 4 L25 10 Z" fill="#222"/><path d="M10 25 L3 24 L5 18 Z" fill="#222"/></svg>
 <div class="lbl" style="left:336px;top:96px;font-size:15px;color:#262e30;letter-spacing:0.16px">Sync info</div>

 <!-- nozzle -->
 <div class="a" style="left:5px;top:145px;width:413px;height:78px;border:1px solid #ececec;background:#fff;overflow:hidden">
   <svg class="a" style="right:0;top:0" width="18" height="17" viewBox="0 0 18 17"><path d="M0 0H18V17Z" fill="#00ae42"/><polyline points="10,5 12.5,7.5 16,3" fill="none" stroke="#fff" stroke-width="1"/></svg>
 </div>
 <div class="lbl" style="left:12px;top:155px;font-size:13px;color:#555">Nozzle</div>
 <div class="lbl" style="left:12px;top:188px;font-size:15px;letter-spacing:0.17px">Diameter</div>
 <div class="inp" style="left:78px;top:183px;width:133px;height:26px"></div>
 <svg class="a" style="left:86px;top:193px" width="12" height="7" viewBox="0 0 12 7"><polyline points="1,1 6,5.5 11,1" fill="none" stroke="#777" stroke-width="1"/></svg>
 <div class="lbl" style="left:102px;top:189px;font-size:15px">0.4</div>
 <div class="lbl" style="left:219px;top:188px;font-size:15px">Flow</div>
 <div class="inp" style="left:254px;top:183px;width:148px;height:26px"></div>
 <svg class="a" style="left:261px;top:193px" width="12" height="7" viewBox="0 0 12 7"><polyline points="1,1 6,5.5 11,1" fill="none" stroke="#777" stroke-width="1"/></svg>
 <div class="lbl" style="left:277px;top:189px;font-size:15px;letter-spacing:0.5px">Standard</div>

 <!-- project filaments -->
 <div class="hdr" style="top:228px;height:32px"></div>
 <svg class="a" style="left:11px;top:236px" width="16" height="16" viewBox="0 0 16 16"><g fill="none" stroke="#00ae42" stroke-width="1.1"><path d="M3 2 C0.5 5 0.5 11 3 14"/><path d="M6.5 2 C4 5 4 11 6.5 14"/><path d="M10 2 C7.5 5 7.5 11 10 14"/><path d="M13.5 2 C11 5 11 11 13.5 14"/><path d="M3 2 C5.5 5 5.5 11 3 14" stroke="#555"/><path d="M13.5 2 C16 5 16 11 13.5 14" stroke="#555"/></g></svg>
 <div class="lbl" style="left:36px;top:235px;font-size:15px;letter-spacing:0.2px">Project Filaments</div>
 <svg class="a" style="left:303px;top:236px" width="15" height="15" viewBox="0 0 15 15"><path d="M7.5 1.5v12M1.5 7.5h12" stroke="#333" stroke-width="1.3"/></svg>
 <svg class="a" style="left:331px;top:236px" width="15" height="15" viewBox="0 0 15 15"><path d="M1.5 7.5h12" stroke="#333" stroke-width="1.3"/></svg>
 <svg class="a" style="left:358px;top:234px" width="18" height="18" viewBox="0 0 18 18"><g fill="none" stroke="#333" stroke-width="1.1"><rect x="1.5" y="3" width="13" height="12" rx="1"/><path d="M1.5 6h13M4 3v3M7 3v3M10 3v3"/></g><circle cx="13" cy="13" r="4" fill="#fff" stroke="#333" stroke-width="1.1"/><path d="M11 12h4M11 14h4" stroke="#333" stroke-width="0.9"/></svg>
 <svg class="a" style="left:389.5px;top:235.2px" width="15" height="15" viewBox="0 0 18 18"><g fill="none" stroke="#333" stroke-width="1.5"><path d="M7.3 1.5h3.4l.5 2.3 1.6.9 2.2-.8 1.7 2.9-1.7 1.6v1.9l1.7 1.6-1.7 2.9-2.2-.8-1.6.9-.5 2.3H7.3l-.5-2.3-1.6-.9-2.2.8-1.7-2.9 1.7-1.6V8.4L1.3 6.8 3 3.9l2.2.8 1.6-.9z"/><circle cx="9" cy="9" r="2.5"/></g></svg>
 <!-- filament row -->
 <div class="a" style="left:11px;top:282px;width:20px;height:20px;background:#000"></div>
 <div class="lbl" style="left:16px;top:285px;font-size:15px;color:#fff">1</div>
 <div class="inp" style="left:37px;top:278px;width:346px;height:30px"></div>
 <svg class="a" style="left:45px;top:290px" width="12" height="7" viewBox="0 0 12 7"><polyline points="1,1 6,5.5 11,1" fill="none" stroke="#777" stroke-width="1"/></svg>
 <div class="lbl" style="left:59.5px;top:286px;font-size:13px;letter-spacing:0.3px">* Bambu PLA Lite</div>
 <svg class="a" style="left:387px;top:283px" width="18" height="18" viewBox="0 0 18 18"><circle cx="9" cy="9" r="7.3" fill="none" stroke="#333" stroke-width="1.2"/><circle cx="5.8" cy="9" r="1" fill="#333"/><circle cx="9" cy="9" r="1" fill="#333"/><circle cx="12.2" cy="9" r="1" fill="#333"/></svg>

 <!-- process -->
 <div class="hdr" style="top:326px;height:32px"></div>
 <svg class="a" style="left:10px;top:333px" width="18" height="17" viewBox="0 0 18 17"><g fill="none" stroke="#555" stroke-width="1.1"><path d="M2 5 L12 1.5 L16 3.5 L6 7 Z"/><path d="M2 8.5 L6 10.5 L16 7" stroke="#00ae42"/><path d="M2 12 L6 14 L16 10.5"/></g></svg>
 <div class="lbl" style="left:36px;top:332.5px;font-size:15px;letter-spacing:-0.3px">Process</div>
 <div class="a" style="left:99px;top:331px;width:102px;height:21px;background:#dcdcdc;border-radius:11px"></div>
 <div class="a" style="left:99px;top:331px;width:53px;height:21px;background:#00ae42;border-radius:11px"></div>
 <div class="lbl" style="left:107px;top:336px;font-size:12px;color:#fff">Global</div>
 <div class="lbl" style="left:154px;top:336px;font-size:12px;color:#666">Objects</div>
 <div class="lbl" style="left:254px;top:332.5px;font-size:15px">Advanced</div>
 <div class="a" style="left:324px;top:334px;width:28px;height:16px;background:#00ae42;border-radius:8px"></div>
 <div class="a" style="left:337px;top:336px;width:13px;height:12px;background:#fff;border-radius:50%"></div>
 <svg class="a" style="left:360px;top:334px" width="16" height="15" viewBox="0 0 16 15"><g stroke="#222" stroke-width="1.3"><path d="M1,3.3h2M1,8h2M1,12.6h2M5,3.3h10M5,8h10M5,12.6h10"/></g></svg>
 <svg class="a" style="left:388px;top:333px" width="16" height="17" viewBox="0 0 16 17"><g fill="none" stroke="#222" stroke-width="1.1"><path d="M1,5.2 H7.8 M4.5,2 L7.8,5.2 L4.5,8.3"/><path d="M2.2,14.4 L13.6,3.2"/><path d="M15,12.6 H8.3 M11.5,9.4 L8.3,12.6 L11.5,15.7"/></g></svg>

 <!-- preset -->
 <svg class="a" style="left:11px;top:376px" width="16" height="15" viewBox="0 0 16 15"><path d="M13 10 A6 6 0 1 1 12 4" fill="none" stroke="#e07b52" stroke-width="1.3"/><path d="M13.5 1 V5.5 H9" fill="none" stroke="#e07b52" stroke-width="1.3"/></svg>
 <div class="inp" style="left:37px;top:368px;width:312px;height:30px"></div>
 <svg class="a" style="left:45px;top:380px" width="12" height="7" viewBox="0 0 12 7"><polyline points="1,1 6,5.5 11,1" fill="none" stroke="#777" stroke-width="1"/></svg>
 <div class="lbl" style="left:59.5px;top:376px;font-size:15px;letter-spacing:0.22px">* 0.20mm Standard @BBL A1</div>
 <svg class="a" style="left:361px;top:376px" width="15" height="15" viewBox="0 0 15 15"><g fill="none" stroke="#333" stroke-width="1.2"><path d="M1.5 1.5h9l3 3v9h-12z"/><path d="M4 13.5v-4h7v4M4 1.5v3h5v-3"/></g></svg>
 <svg class="a" style="left:388px;top:374px" width="18" height="18" viewBox="0 0 18 18"><circle cx="7.5" cy="7.5" r="5.5" fill="none" stroke="#333" stroke-width="1.3"/><path d="M11.5 11.5 L16.5 16.5" stroke="#333" stroke-width="1.5"/></svg>

 <!-- tabs -->
 <div class="lbl" style="left:15px;top:411px;font-size:15px;color:#d4663a;letter-spacing:0.6px">Quality</div>
 <div class="a" style="left:12px;top:429px;width:58px;height:3px;background:#00ae42;border-radius:2px"></div>
 <div class="lbl" style="left:96px;top:411px;font-size:15px;color:#555;letter-spacing:0.65px">Strength</div>
 <div class="lbl" style="left:187px;top:411px;font-size:15px;color:#d4663a;letter-spacing:-0.3px">Speed</div>
 <div class="lbl" style="left:260px;top:411px;font-size:15px;color:#d4663a;letter-spacing:0.53px">Support</div>
 <div class="lbl" style="left:348px;top:411px;font-size:15px;color:#555">Others</div>
 <div class="a" style="left:1px;top:433px;width:420px;height:1px;background:#dedede"></div>

 <!-- scrollbar -->
 <div class="a" style="left:405px;top:440px;width:15px;height:506px;background:#f0f0f0"></div>
 <div class="a" style="left:405px;top:457px;width:15px;height:157px;background:#cbcbcb"></div>
 <svg class="a" style="left:408px;top:445px" width="9" height="7" viewBox="0 0 9 7"><polyline points="1,5.5 4.5,1.5 8,5.5" fill="none" stroke="#222" stroke-width="1.5"/></svg>
 <div class="a" style="left:421px;top:0;width:1px;height:946px;background:#a9a9a9"></div>
 <div class="a" style="left:422px;top:0;width:4px;height:946px;background:#d3d3d3"></div>
</div>
<div class="a" style="left:0;top:0;width:405px;height:1013px;overflow:hidden">
<!-- settings -->
 <svg class="a" style="left:11px;top:518px" width="17" height="15" viewBox="0 0 17 15"><path d="M1.5,5 Q1.5,1 5,1 H12 Q15.5,1 15.5,5 V14 H1.5 Z" fill="#d8d8d8" stroke="#333" stroke-width="1.1"/><path d="M1.5,5.5 H15.5 M1.5,8.5 H15.5 M1.5,11.5 H15.5" stroke="#333" stroke-width="1.4"/></svg>
 <div class="lbl" style="left:33px;top:517px;font-size:15px;font-weight:bold;color:#1f2527">Layer height</div>
 <div class="a" style="left:127px;top:527px;width:268px;height:1px;background:#ebebeb"></div>
 <div class="lbl" style="left:31px;top:549px;font-size:15px;letter-spacing:0.32px">Layer height</div>
 <div class="inp" style="left:251px;top:544px;width:120px;height:26px"></div>
 <div class="val" style="left:259px;top:549px">0.2</div>
 <div class="mm" style="left:341px;top:554px">mm</div>
 <div class="lbl" style="left:31px;top:579px;font-size:15px;letter-spacing:0.44px">Initial layer height</div>
 <div class="inp" style="left:251px;top:574px;width:120px;height:26px"></div>
 <div class="val" style="left:259px;top:579px">0.2</div>
 <div class="mm" style="left:341px;top:584px">mm</div>
 <svg class="a" style="left:11px;top:625px" width="17" height="14" viewBox="0 0 17 14"><rect x="1.5" y="1" width="14" height="5" rx="2" fill="#b5b5b5" stroke="#333" stroke-width="1.1"/><path d="M1.5,8.5 H15.5 M1.5,8.5 V13.5 M15.5,8.5 V13.5" fill="none" stroke="#333" stroke-width="1.1"/></svg>
 <div class="lbl" style="left:33px;top:623px;font-size:15px;font-weight:bold;color:#1f2527">Line width</div>
 <div class="a" style="left:113px;top:633px;width:282px;height:1px;background:#ebebeb"></div>
 <div class="lbl" style="left:31px;top:655px;font-size:15px;letter-spacing:0.5px">Default</div>
 <div class="inp" style="left:251px;top:650px;width:120px;height:26px"></div>
 <div class="val" style="left:259px;top:655px">0.42</div>
 <div class="mm" style="left:341px;top:660px">mm</div>
 <div class="lbl" style="left:31px;top:685px;font-size:15px;letter-spacing:0.4px">Initial layer</div>
 <div class="inp" style="left:251px;top:680px;width:120px;height:26px"></div>
 <div class="val" style="left:259px;top:685px">0.5</div>
 <div class="mm" style="left:341px;top:690px">mm</div>
 <div class="lbl" style="left:31px;top:715px;font-size:15px;letter-spacing:0.39px">Outer wall</div>
 <div class="inp" style="left:251px;top:710px;width:120px;height:26px"></div>
 <div class="val" style="left:259px;top:715px">0.42</div>
 <div class="mm" style="left:341px;top:720px">mm</div>
 <div class="lbl" style="left:31px;top:745px;font-size:15px;letter-spacing:0.31px">Inner wall</div>
 <div class="inp" style="left:251px;top:740px;width:120px;height:26px"></div>
 <div class="val" style="left:259px;top:745px">0.45</div>
 <div class="mm" style="left:341px;top:750px">mm</div>
 <div class="lbl" style="left:31px;top:775px;font-size:15px;letter-spacing:0.33px">Top surface</div>
 <div class="inp" style="left:251px;top:770px;width:120px;height:26px"></div>
 <div class="val" style="left:259px;top:775px">0.42</div>
 <div class="mm" style="left:341px;top:780px">mm</div>
 <div class="lbl" style="left:31px;top:805px;font-size:15px;letter-spacing:0.24px">Sparse infill</div>
 <div class="inp" style="left:251px;top:800px;width:120px;height:26px"></div>
 <div class="val" style="left:259px;top:805px">0.45</div>
 <div class="mm" style="left:341px;top:810px">mm</div>
 <div class="lbl" style="left:31px;top:835px;font-size:15px;letter-spacing:0.45px">Internal solid infill</div>
 <div class="inp" style="left:251px;top:830px;width:120px;height:26px"></div>
 <div class="val" style="left:259px;top:835px">0.42</div>
 <div class="mm" style="left:341px;top:840px">mm</div>
 <div class="lbl" style="left:31px;top:865px;font-size:15px;letter-spacing:0.6px">Support</div>
 <div class="inp" style="left:251px;top:860px;width:120px;height:26px"></div>
 <div class="val" style="left:259px;top:865px">0.42</div>
 <div class="mm" style="left:341px;top:870px">mm</div>
 <svg class="a" style="left:11px;top:910px" width="15" height="15" viewBox="0 0 15 15"><rect x="1" y="1" width="13" height="13" fill="#e8e8e8" stroke="#555" stroke-width="1"/><path d="M4 12 V8 Q4 5 8 4.5 L11 4" fill="none" stroke="#555" stroke-width="0.9" stroke-dasharray="1.5 1"/></svg>
 <div class="lbl" style="left:33px;top:909px;font-size:15px;font-weight:bold;color:#1f2527;letter-spacing:-0.5px">Seam</div>
 <div class="a" style="left:78px;top:919px;width:317px;height:1px;background:#ebebeb"></div>
 <div class="lbl" style="left:31px;top:941px;font-size:15px;letter-spacing:0.26px">Seam position</div>
 <div class="inp" style="left:251px;top:936px;width:120px;height:26px"></div>
 <svg class="a" style="left:259px;top:946px" width="12" height="7" viewBox="0 0 12 7"><polyline points="1,1 6,5.5 11,1" fill="none" stroke="#777" stroke-width="1"/></svg>
 <div class="val" style="left:275px;top:942px;letter-spacing:0.48px">Aligned</div>
 <div class="lbl" style="left:31px;top:972px;font-size:15px;letter-spacing:0.19px">Seam placement away from</div>
 <div class="lbl" style="left:31px;top:990px;font-size:15px;letter-spacing:0.31px">overhangs(experimental)</div>
 <div class="a" style="left:252px;top:981px;width:16px;height:16px;border:1px solid #9a9a9a;background:#fff"></div>
</div>
</body></html>
